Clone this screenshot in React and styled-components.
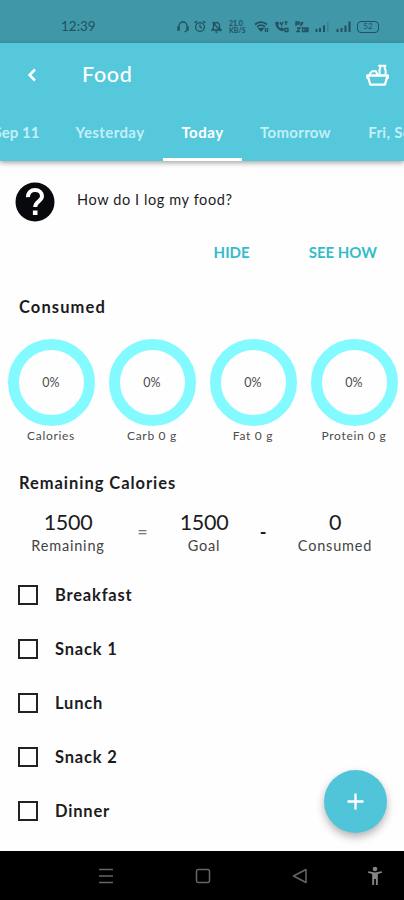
import React from 'react'
import styled, { createGlobalStyle } from 'styled-components'

const days = [
    { label: 'Sep 11', width: 73, spacing: 0 },
    { label: 'Yesterday', width: 110, spacing: 0.4 },
    { label: 'Today', width: 79, spacing: 0.5, active: true },
    { label: 'Tomorrow', width: 108, spacing: 0.3 },
    { label: 'Fri, Sep 15', width: 110, spacing: 0.3 },
]

const nutrients = [
    { label: 'Calories', percent: 0 },
    { label: 'Carb 0 g', percent: 0 },
    { label: 'Fat 0 g', percent: 0 },
    { label: 'Protein 0 g', percent: 0 },
]

const meals = ['Breakfast', 'Snack 1', 'Lunch', 'Snack 2', 'Dinner']

const StatusIcons = () => (
    <Icons>
        <svg width="12" height="13" viewBox="0 0 12 13">
            <path d="M2 10V6a4 4 0 0 1 8 0v4M2 7H1v3h2M10 7h1v3H9M9.5 11l-2 1" />
        </svg>
        <Gap $size={5} />
        <svg width="12" height="13" viewBox="0 0 12 13">
            <circle cx="6" cy="7" r="4.4" />
            <path d="M6 4.5V7l2 1M.8 3l2-2M11.2 3l-2-2" />
        </svg>
        <Gap $size={5} />
        <svg width="11" height="13" viewBox="0 0 11 13">
            <path d="M1 10h9L8.5 8V5.5a3 3 0 0 0-6 0V8L1 10ZM4.5 12h2M1.5 2l8 9" />
        </svg>
        <Gap $size={7} />
        <Speed><span>21.0</span><span>KB/S</span></Speed>
        <Gap $size={8} />
        <svg width="15" height="13" viewBox="0 0 15 13">
            <path d="M1 4.5c3.5-3.2 8.5-3.2 12 0M3 6.8c2.5-2 5.5-2 8 0" strokeWidth="1.7" />
            <path d="M4.8 8.5h4.4L7 11Z" fill="currentColor" />
            <path d="M11.5 8v4M13.5 8v4" />
        </svg>
        <Gap $size={5} />
        <svg width="16" height="13" viewBox="0 0 16 13">
            <path d="M1.5 2c0 5 3 8.5 7.5 9l1-2-2.5-1.5-1 1C5 7.5 4 6 3.7 5L5 4 4 2Z" fill="currentColor" strokeWidth=".5" />
            <path d="M6 2l1.5 3L9 2M10.5 2h3M12 2v3M11 8.5h3v3h-3z" />
        </svg>
        <Gap $size={5} />
        <svg width="14" height="13" viewBox="0 0 14 13">
            <path d="M1 6V2h3v2H1M6 2v4l2-4M2 8h3l-3 3.5h3M7.5 8H10v3.5H7.5zM11.5 8H13v3.5h-1.5z" />
        </svg>
        <Gap $size={6} />
        <svg width="14" height="13" viewBox="0 0 14 13">
            <path d="M1.5 9v3M5 8v4M9 5.5V12" strokeWidth="2" />
            <path d="M12.8 2v10" strokeWidth="1.5" opacity=".3" />
        </svg>
        <Gap $size={7} />
        <svg width="15" height="13" viewBox="0 0 15 13">
            <path d="M1.5 9v3M5.5 8v4M9.5 5.5V12M13.5 1.5V12" strokeWidth="2" />
        </svg>
        <Gap $size={6} />
        <Battery>52</Battery>
    </Icons>
)

const BasketIcon = () => (
    <svg width="25" height="24" viewBox="0 0 25 24" fill="none" stroke="#fff" strokeWidth="2" strokeLinejoin="round">
        <path d="M2.3 12.5h20.5v2.300h-.9l-2 6.900H5.300l-2-6.900h-1Z" strokeWidth="2.3" />
        <path d="M5 12v-1.500l2-2.200h4l1.500 3.500M14.500 11.500V7l.7-1.500V3.200M13.300 2.700h8M19.700 3.200v2.300l.9 1.500v4.500" />
    </svg>
)

const App = () => {
    return (
        <>
            <GlobalStyle />
            <Screen>
                <StatusBar>
                    <Clock>12:39</Clock>
                    <StatusIcons />
                </StatusBar>

                <Header>
                    <TitleRow>
                        <Back aria-label="Back">
                            <svg width="10" height="14" viewBox="0 0 10 14">
                                <path d="M8 1.5 2.5 7 8 12.5" fill="none" stroke="#fff" strokeWidth="2.5" />
                            </svg>
                        </Back>
                        <Title>Food</Title>
                        <BasketIcon />
                    </TitleRow>
                    <Tabs>
                        {days.map(({ label, width, spacing, active }) => (
                            <Tab key={label} $width={width} $spacing={spacing} $active={active}>
                                {label}
                            </Tab>
                        ))}
                    </Tabs>
                </Header>

                <Help>
                    <HelpRow>
                        <svg width="40" height="40" viewBox="0 0 40 40">
                            <circle cx="20" cy="20" r="19.5" fill="#08090c" />
                            <path d="M13 15.200C12.800 10.500 16 8 20 8s7 2.600 7 6.300c0 4.700-6.800 5.300-6.800 10.700" fill="none" stroke="#fff" strokeWidth="4" />
                            <path d="M17.900 28.500h4.600v4.500h-4.600z" fill="#fff" />
                        </svg>
                        <Question>How do I log my food?</Question>
                    </HelpRow>
                    <Actions>
                        <Action>HIDE</Action>
                        <Action>SEE HOW</Action>
                    </Actions>
                </Help>

                <Heading $spacing={1.1}>Consumed</Heading>
                <Rings>
                    {nutrients.map(({ label, percent }) => (
                        <Nutrient key={label}>
                            <Ring>{percent}%</Ring>
                            <Caption>{label}</Caption>
                        </Nutrient>
                    ))}
                </Rings>

                <Heading $spacing={0.95}>Remaining Calories</Heading>
                <Equation>
                    <Amount>
                        <b>1500</b>
                        <span>Remaining</span>
                    </Amount>
                    <Operator>=</Operator>
                    <Amount>
                        <b>1500</b>
                        <span>Goal</span>
                    </Amount>
                    <Operator $dark>-</Operator>
                    <Amount>
                        <b>0</b>
                        <span>Consumed</span>
                    </Amount>
                </Equation>

                <Meals>
                    {meals.map((meal) => (
                        <Meal key={meal}>
                            <Box />
                            <span>{meal}</span>
                        </Meal>
                    ))}
                </Meals>

                <AddButton aria-label="Add food">
                    <svg width="17" height="17" viewBox="0 0 17 17">
                        <path d="M8.5 .5v16M.5 8.5h16" stroke="#fff" strokeWidth="2.3" />
                    </svg>
                </AddButton>

                <NavBar>
                    <svg width="16" height="16" viewBox="0 0 16 16">
                        <path d="M1 1.5h14M1 8h14M1 14.5h14" />
                    </svg>
                    <svg width="16" height="16" viewBox="0 0 16 16">
                        <rect x="1.5" y="1.5" width="13" height="13" rx="2" />
                    </svg>
                    <svg width="16" height="16" viewBox="0 0 16 16">
                        <path d="M14 1.5v13L1.5 8Z" strokeLinejoin="round" />
                    </svg>
                    <svg width="16" height="20" viewBox="0 0 16 20">
                        <g fill="#858585" stroke="none">
                            <circle cx="8" cy="3" r="2.3" />
                            <path d="M1.3 5.2 8 6.5l6.7-1.3.4 1.5-4.3 1.2V19H8.900v-6H7.100v6H5.200V7.900L.9 6.700Z" />
                        </g>
                    </svg>
                </NavBar>
            </Screen>
        </>
    )
}

const GlobalStyle = createGlobalStyle`
    * {
        box-sizing: border-box;
    }

    body {
        margin: 0;
        background: #fff;
        font-family: Lato, "Liberation Sans", sans-serif;
    }

    button {
        padding: 0;
        border: none;
        background: transparent;
        font-family: inherit;
    }

    svg {
        display: block;
        flex-shrink: 0;
    }
`

const Screen = styled.div`
    position: relative;
    display: flex;
    flex-direction: column;
    width: 404px;
    height: 900px;
    overflow: hidden;
    background: #fefefe;
    color: #1c1c1e;
`

const StatusBar = styled.div`
    display: flex;
    justify-content: space-between;
    height: 43px;
    padding: 18px 25px 0 61px;
    background: #4097a7;
    color: #23505f;
`

const Clock = styled.span`
    font-size: 13.5px;
    line-height: 17px;
`

const Icons = styled.div`
    display: flex;
    align-items: center;
    height: 17px;

    svg {
        fill: none;
        stroke: currentColor;
        stroke-width: 1.3;
    }
`

const Gap = styled.i`
    width: ${({ $size }) => $size}px;
    flex-shrink: 0;
`

const Speed = styled.div`
    display: flex;
    flex-direction: column;
    width: 17px;
    font-size: 7px;
    font-weight: 700;
    line-height: 6.5px;
`

const Battery = styled.div`
    width: 22px;
    height: 12px;
    border: 1.5px solid #23505f;
    border-radius: 4px;
    font-size: 8px;
    line-height: 9px;
    text-align: center;
`

const Header = styled.header`
    flex-shrink: 0;
    height: 118px;
    background: #55c8dc;
    box-shadow: 0 2px 5px rgba(0, 0, 0, 0.35);
`

const TitleRow = styled.div`
    display: flex;
    align-items: center;
    height: 64px;
    padding: 0 14px 0 27px;
`

const Back = styled.button`
    display: flex;
    width: 55px;
`

const Title = styled.h1`
    flex: 1;
    margin: 0;
    padding-bottom: 2px;
    color: #fff;
    font-size: 21.5px;
    font-weight: 500;
    letter-spacing: 0.7px;
`

const Tabs = styled.nav`
    display: flex;
    height: 54px;
    margin-left: -20px;
`

const Tab = styled.button`
    flex: 0 0 ${({ $width }) => $width}px;
    height: 54px;
    padding-bottom: 1px;
    border-bottom: 3px solid ${({ $active }) => $active ? '#fff' : 'transparent'};
    color: ${({ $active }) => $active ? '#fff' : '#c3eff7'};
    font-size: 15px;
    font-weight: 700;
    letter-spacing: ${({ $spacing }) => $spacing}px;
    white-space: nowrap;

    &:nth-child(2) {
        padding-left: 4px;
    }

    &:nth-child(4) {
        padding-right: 1px;
    }
`

const Help = styled.section`
    height: 121px;
    padding: 21px 27px 0 15px;
`

const HelpRow = styled.div`
    display: flex;
    height: 59px;
`

const Question = styled.p`
    margin: 8px 0 0 22px;
    font-size: 14.5px;
    line-height: 20px;
    letter-spacing: 0.6px;
`

const Actions = styled.div`
    display: flex;
    justify-content: flex-end;
    gap: 59px;
`

const Action = styled.button`
    color: #35bccb;
    font-size: 15px;
    font-weight: 700;
    line-height: 22px;
`

const Heading = styled.h2`
    margin: 14px 0 0 19px;
    font-size: 16.5px;
    font-weight: 700;
    line-height: 22px;
    letter-spacing: ${({ $spacing }) => $spacing}px;
`

const Rings = styled.div`
    display: grid;
    grid-template-columns: repeat(4, 101px);
    height: 140px;
    padding: 21px 0 0 1px;
`

const Nutrient = styled.div`
    display: flex;
    flex-direction: column;
    align-items: center;
`

const Ring = styled.div`
    display: flex;
    justify-content: center;
    align-items: center;
    width: 87px;
    height: 87px;
    padding-right: 1px;
    border: 11px solid #82faff;
    border-radius: 50%;
    color: #4c4c4c;
    font-size: 12.5px;
`

const Caption = styled.span`
    margin-top: 2px;
    padding-right: 1px;
    color: #4c4c4c;
    font-size: 12px;
    line-height: 16px;
    letter-spacing: 0.7px;
`

const Equation = styled.div`
    display: grid;
    grid-template-columns: 106px 43px 80px 38px 106px;
    justify-content: start;
    height: 74px;
    padding: 15px 0 0 15px;
`

const Amount = styled.div`
    display: flex;
    flex-direction: column;
    align-items: center;

    b {
        font-size: 21.5px;
        font-weight: 400;
        line-height: 27px;
        letter-spacing: -0.3px;
    }

    span {
        color: #444;
        font-size: 14.5px;
        line-height: 20px;
        letter-spacing: 0.8px;
    }
`

const Operator = styled.span`
    padding-top: ${({ $dark }) => $dark ? 11 : 10}px;
    color: ${({ $dark }) => $dark ? '#1c1c1e' : '#777'};
    font-size: 18px;
    font-weight: ${({ $dark }) => $dark ? 700 : 400};
    line-height: 24px;
    text-align: center;
`

const Meals = styled.ul`
    margin: 0;
    padding: 0;
    list-style: none;
`

const Meal = styled.li`
    display: flex;
    align-items: center;
    gap: 17px;
    height: 54px;
    padding-left: 18px;
    font-size: 16.5px;
    font-weight: 700;
    letter-spacing: 0.8px;

    span:last-child {
        padding-bottom: 1px;
    }
`

const Box = styled.span`
    width: 20px;
    height: 20px;
    border: 2px solid #222;
`

const AddButton = styled.button`
    position: absolute;
    right: 17px;
    bottom: 67px;
    display: flex;
    justify-content: center;
    align-items: center;
    width: 63px;
    height: 63px;
    border-radius: 50%;
    background: #50c5d9;
    box-shadow: 0 4px 9px rgba(0, 0, 0, 0.3);
`

const NavBar = styled.footer`
    display: grid;
    grid-template-columns: 97px 97px 75px 16px;
    align-items: center;
    height: 49px;
    margin-top: auto;
    padding-left: 98px;
    background: #000;

    svg {
        fill: none;
        stroke: #666;
        stroke-width: 1.5;
    }
`

export default App
